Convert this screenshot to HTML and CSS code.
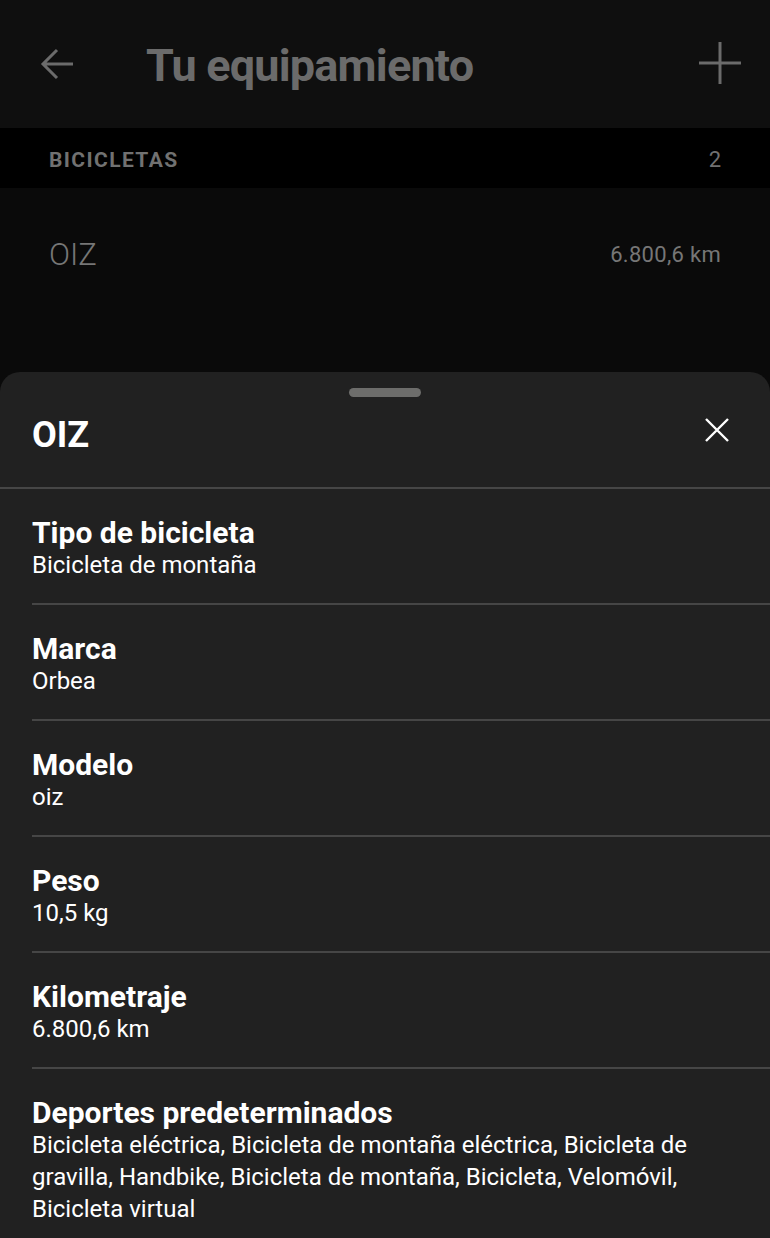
FILE: index.html
```html
<!DOCTYPE html>
<html lang="es">
<head>
    <meta charset="UTF-8">
    <title>Tu equipamiento</title>
    <link rel="stylesheet" href="styles.css">
</head>
<body>
<div class="page">
    <div class="topbar">
        <svg class="back" width="34" height="34" viewBox="0 0 34 34">
            <path d="M33 17H3M17 3L3 17l14 14" fill="none" stroke="#6b6b6b" stroke-width="3"/>
        </svg>
        <h1>Tu equipamiento</h1>
        <svg class="add" width="42" height="42" viewBox="0 0 42 42">
            <path d="M21 0v42M0 21h42" fill="none" stroke="#6b6b6b" stroke-width="3"/>
        </svg>
    </div>
    <div class="section">
        <span>BICICLETAS</span>
        <span class="count">2</span>
    </div>
    <div class="bike">
        <span class="name">OIZ</span>
        <span class="dist">6.800,6 km</span>
    </div>

    <div class="sheet">
        <div class="handle"></div>
        <div class="sheethead">
            <h2>OIZ</h2>
            <svg class="close" width="24" height="24" viewBox="0 0 24 24">
                <path d="M1 1l22 22M23 1L1 23" fill="none" stroke="#fff" stroke-width="2.4"/>
            </svg>
        </div>
        <ul class="props">
            <li>
                <b>Tipo de bicicleta</b>
                <span>Bicicleta de montaña</span>
            </li>
            <li>
                <b>Marca</b>
                <span>Orbea</span>
            </li>
            <li>
                <b>Modelo</b>
                <span>oiz</span>
            </li>
            <li>
                <b>Peso</b>
                <span>10,5 kg</span>
            </li>
            <li>
                <b>Kilometraje</b>
                <span>6.800,6 km</span>
            </li>
            <li>
                <b>Deportes predeterminados</b>
                <span>Bicicleta eléctrica, Bicicleta de montaña eléctrica, Bicicleta de gravilla, Handbike, Bicicleta de montaña, Bicicleta, Velomóvil, Bicicleta virtual</span>
            </li>
        </ul>
    </div>
</div>
</body>
</html>
```

FILE: styles.css
```css
body{
    margin: 0;
    background: #0a0a0a;
    font-family: Roboto, "Liberation Sans", sans-serif;
}
.page{
    width: 770px;
    height: 1238px;
    overflow: hidden;
    display: flex;
    flex-direction: column;
}
.topbar{
    height: 128px;
    flex-shrink: 0;
    background: #0f0f0f;
    display: flex;
    align-items: center;
    padding: 0 29px 0 40px;
}
.topbar h1{
    margin: 2px 0 0 72px;
    flex: 1;
    font-size: 45px;
    font-weight: 700;
    color: #6b6b6b;
    letter-spacing: -0.8px;
}
.topbar .add{
    margin-top: -2px;
}
.section{
    height: 60px;
    box-sizing: border-box;
    padding: 3px 49px 0;
    flex-shrink: 0;
    background: #000;
    display: flex;
    align-items: center;
    justify-content: space-between;
    font-size: 21px;
    font-weight: 700;
    color: #717171;
}
.section span:first-child{
    letter-spacing: 1.4px;
}
.section .count{
    font-weight: 400;
    font-size: 22px;
}
.bike{
    height: 132px;
    flex-shrink: 0;
    display: flex;
    align-items: center;
    justify-content: space-between;
    padding: 0 49px;
    color: #767676;
}
.bike .name{
    font-size: 31px;
    font-weight: 300;
}
.bike .dist{
    font-size: 22px;
    letter-spacing: 0.3px;
}
.sheet{
    flex: 1;
    min-height: 0;
    margin-top: 52px;
    background: #212121;
    border-radius: 20px 20px 0 0;
    color: #fff;
}
.handle{
    width: 72px;
    height: 9px;
    border-radius: 5px;
    background: #6d6d6b;
    margin: 16px auto 0;
}
.sheethead{
    height: 95px;
    box-sizing: border-box;
    display: flex;
    align-items: flex-start;
    justify-content: space-between;
    padding: 20px 41px 0 32px;
    border-bottom: 2px solid #464646;
    margin-top: -3px;
}
.sheethead h2{
    margin: 0;
    font-size: 36px;
    line-height: 42px;
    font-weight: 700;
}
.sheethead .close{
    margin-top: 4px;
}
.props{
    margin: 0;
    padding: 0 0 0 32px;
}
.props li{
    list-style: none;
    padding: 28px 32px 22px 0;
    border-bottom: 2px solid #464646;
    display: flex;
    flex-direction: column;
}
.props li:last-child{
    border-bottom: none;
}
.props b{
    font-size: 30px;
    line-height: 32px;
    font-weight: 700;
}
.props span{
    font-size: 24px;
    line-height: 32px;
}
```
